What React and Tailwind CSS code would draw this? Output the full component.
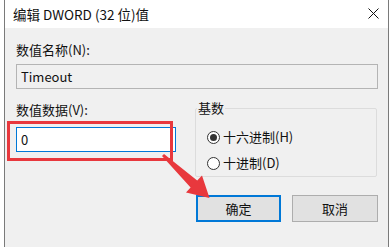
import React from 'react';

const FONT = { fontFamily: '"Noto Sans CJK SC", "Noto Sans", sans-serif' };

const Radio = ({ checked, label }) => (
  <div className="flex items-center h-[16px]">
    <span className="w-[13px] h-[13px] rounded-full border border-[#333] bg-white flex items-center justify-center">
      {checked && <span className="w-[7px] h-[7px] rounded-full bg-[#333]" />}
    </span>
    <span className="ml-[3px]">{label}</span>
  </div>
);

export default function App() {
  return (
    <div className="relative w-[392px] h-[247px] bg-white overflow-hidden text-[13px] leading-[16px] text-[#111]" style={FONT}>
      <div className="ml-[4px] w-[385px] h-full border-x border-[#7a7a7a] flex flex-col">
        {/* title bar */}
        <div className="h-[28px] bg-white flex items-center justify-between pl-[8px] pr-[9px] shrink-0">
          <span className="text-[13.5px]">编辑 DWORD (32 位)值</span>
          <svg width="11" height="11" viewBox="0 0 11 11" className="mt-[-2px]">
            <path d="M0.5 0.5 L10.5 10.5 M10.5 0.5 L0.5 10.5" stroke="#111" strokeWidth="1" />
          </svg>
        </div>

        {/* body */}
        <div className="flex-1 bg-[#f0f0f0] pl-[11px] pr-[10px] pt-[14px]">
          <div>数值名称(N):</div>
          <div className="mt-[6px] h-[25px] border border-[#b4b4b4] bg-[#f0f0f0] flex items-center pl-[4px]">
            Timeout
          </div>

          <div className="flex mt-[13px]">
            <div className="w-[160px]">
              <div>数值数据(V):</div>
              <div className="mt-[9px] h-[25px] border border-[#0078d7] bg-white flex items-center pl-[4px]">
                0
              </div>
            </div>
            <fieldset className="ml-[19px] w-[182px] h-[77px] border border-[#dcdcdc] rounded-[2px] mt-[-2px] pl-[11px]">
              <legend className="ml-[-10px] px-[1px]">基数</legend>
              <div className="mt-[13px] flex flex-col gap-[10px]">
                <Radio checked label="十六进制(H)" />
                <Radio label="十进制(D)" />
              </div>
            </fieldset>
          </div>

          <div className="flex justify-end gap-[11px] mt-[18px]">
            <button className="w-[85px] h-[27px] border-2 border-[#0078d7] bg-[#e1e1e1]">确定</button>
            <button className="w-[86px] h-[27px] border border-[#adadad] bg-[#e1e1e1]">取消</button>
          </div>
        </div>
      </div>

      {/* red annotation */}
      <div className="absolute left-[7px] top-[121px] w-[166px] h-[40px] border-[3px] border-[#e8383d]" />
      <svg className="absolute left-0 top-0" width="392" height="247" viewBox="0 0 392 247">
        <polygon
          points="162,156 190.6,187.6 186,192.5 209.5,198 202,175.5 197.2,180.5 164,154"
          fill="#e8383d"
        />
      </svg>
    </div>
  );
}
